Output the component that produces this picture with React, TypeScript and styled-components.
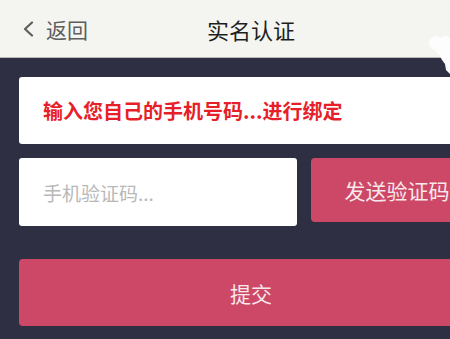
import React from 'react';
import styled, { createGlobalStyle } from 'styled-components';

const GlobalStyle = createGlobalStyle`
  html, body {
    margin: 0;
    padding: 0;
    width: 450px;
    height: 339px;
    overflow: hidden;
    background: #2f2f44;
  }
  body {
    font-family: "Noto Sans CJK SC", "Noto Sans", sans-serif;
  }
`;

const Page = styled.div`
  position: relative;
  width: 502px;
  height: 339px;
  background: #2f2f44;
  display: flex;
  flex-direction: column;
`;

const Header = styled.header`
  height: 57px;
  flex-shrink: 0;
  background: #f4f5f1;
  border-bottom: 1px solid #b9bab8;
  display: grid;
  grid-template-columns: 1fr auto 1fr;
  align-items: center;
`;

const Back = styled.div`
  display: flex;
  align-items: center;
  gap: 12px;
  padding-left: 22px;
  color: #5e5e5e;
  font-size: 21px;
`;

const Title = styled.h1`
  margin: 0;
  font-size: 22px;
  font-weight: 400;
  color: #1e1e1e;
`;

const Body = styled.main`
  display: flex;
  flex-direction: column;
  padding: 19px 19px 0;
`;

const Notice = styled.div`
  height: 67px;
  background: #fff;
  border-radius: 3px;
  display: flex;
  align-items: center;
  padding-left: 24px;
  color: #e61f29;
  font-size: 20px;
  font-weight: 700;
`;

const CodeRow = styled.div`
  display: flex;
  gap: 14px;
  margin-top: 14px;
  align-items: flex-start;
`;

const CodeInput = styled.input`
  width: 278px;
  height: 68px;
  box-sizing: border-box;
  border: none;
  border-radius: 3px;
  background: #fff;
  padding: 0 0 0 24px;
  font-family: inherit;
  font-size: 19px;
  outline: none;
  &::placeholder {
    color: #b8b8b8;
  }
`;

const PinkButton = styled.button<{ $height: number }>`
  height: ${p => p.$height}px;
  border: none;
  border-radius: 4px;
  background: #cd4866;
  color: #f6e9ec;
  font-family: inherit;
  font-size: 21px;
  padding: 0;
`;

const SendButton = styled(PinkButton)`
  flex: 1;
`;

const SubmitButton = styled(PinkButton)`
  margin-top: 33px;
  width: 100%;
`;

const Blob = styled.svg`
  position: absolute;
  left: 426px;
  top: 34px;
`;

export default function App() {
  return (
    <>
      <GlobalStyle />
      <Page>
        <Header>
          <Back>
            <svg width="12" height="16" viewBox="0 0 12 16">
              <polyline points="10,1.5 3,8 10,14.5" fill="none" stroke="#5e5e5e" strokeWidth="2.2" strokeLinecap="round" strokeLinejoin="round" />
            </svg>
            <span>返回</span>
          </Back>
          <Title>实名认证</Title>
          <div />
        </Header>
        <Body>
          <Notice>输入您自己的手机号码...进行绑定</Notice>
          <CodeRow>
            <CodeInput placeholder="手机验证码..." />
            <SendButton $height={64}>发送验证码</SendButton>
          </CodeRow>
          <SubmitButton $height={67}>提交</SubmitButton>
        </Body>
        <Blob width="24" height="40" viewBox="0 0 24 40">
          <circle cx="10" cy="9" r="7" fill="#fdfdfd" />
          <circle cx="19" cy="8" r="6" fill="#fdfdfd" />
          <path d="M6 13 L24 4 L24 40 L20 36 L19 30 L16 26 L14 22 Z" fill="#fdfdfd" />
        </Blob>
      </Page>
    </>
  );
}
